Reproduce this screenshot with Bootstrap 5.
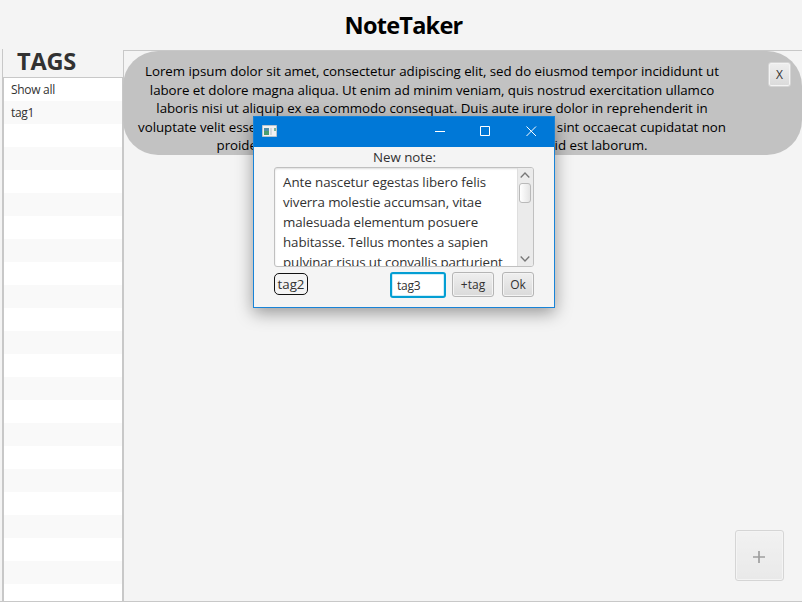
<!DOCTYPE html>
<html lang="en">
<head>
<meta charset="utf-8">
<title>NoteTaker</title>
<link href="https://cdn.jsdelivr.net/npm/bootstrap@5.3.0/dist/css/bootstrap.min.css" rel="stylesheet">
<style>
body{width:802px;height:602px;background:#f4f4f4;font-family:"Open Sans","Noto Sans",sans-serif;font-size:12px;color:#323232;line-height:1}
.app-title{height:49px;font-size:23.5px;line-height:51px;color:#000;letter-spacing:-.75px;padding-left:5px}
.side{width:121px;margin-left:2px;border-left:1px solid #c8c8c8}
.side h2{height:28px;font-size:23.5px;line-height:25px;padding-left:14px;letter-spacing:-.2px}
.tag-list{border:solid #c8c8c8;border-width:1px 1px 0;background:repeating-linear-gradient(#fff 0 23px,#f9f9f9 23px 46px)}
.tag-list li{height:23px;line-height:24px;padding-left:7px;letter-spacing:-.3px}
.notes{margin-top:1px;border:solid #c8c8c8;border-width:1px 0 0 1px}
.main-row{border-bottom:1px solid #c8c8c8}
.note{height:104px;margin-left:-1px;background:#c2c2c2;border-radius:35px;padding:11px 11px 0 15px}
.note-text{width:588px;font-size:13.33px;line-height:18.5px;color:#000;letter-spacing:-.04px}
.note-text div{white-space:nowrap;display:flex;justify-content:center}
.note-text .snug{letter-spacing:-.054px}
.fx{color:#323232;border:1px solid #b5b5b5;border-radius:3px;background:linear-gradient(#efefef,#dadada);box-shadow:inset 0 0 0 1px #f4f4f4;padding:0;font-size:12px;line-height:1}
.btn-close-note{width:23px;height:25px;border-color:#d5d5d5}
.btn-add{width:49px;height:51px;opacity:.4;margin:0 18px 20px 0;border-color:#a8a8a8}
.btn-add svg{margin:2px 2px 0 0}
.window{left:253px;top:116px;width:302px;height:192px;background:#f4f4f4;border:1px solid #1883d7;box-shadow:0 5px 16px rgba(0,0,0,.38)}
.title-bar{height:30px;background:#0078d7}
.lbl{height:20px;font-size:13.33px;line-height:21px;letter-spacing:-.05px;padding-left:1px}
.area{height:100px;margin:0 20px;background:#fff;border:1px solid #c0c0c0;border-radius:3px;box-shadow:inset 0 1px 2px #ddd}
.area-text{font-size:13.33px;line-height:20px;padding:4px 0 0 8px;white-space:nowrap;letter-spacing:-.1px}
.area-text .wide{letter-spacing:-.05px}
.bar{width:16px;background:#ebebeb;border-left:1px solid #dedede;padding-right:2px}
.thumb{width:12px;height:20px;border:1px solid #b9b9b9;border-radius:3px;background:linear-gradient(90deg,#fff,#e4e4e4)}
.foot{margin:5px 20px 0}
.chip{width:34px;height:22px;margin-top:1px;border:1px solid #111;border-radius:5px;font-size:13.33px;line-height:20px;letter-spacing:-.05px}
.field{width:56px;height:26px;margin-right:6px;border:2px solid #039ed3;border-radius:3px;background:#fff;box-shadow:inset 0 0 0 1px #cdeef9;padding:0 0 0 5px;font-size:12px;letter-spacing:-.2px;color:#323232;outline:0}
.btn-tag{width:42px;height:25px}
.btn-ok{width:32px;height:25px}
</style>
<script src="https://cdn.jsdelivr.net/npm/bootstrap@5.3.0/dist/js/bootstrap.bundle.min.js"></script>
</head>
<body class="d-flex flex-column overflow-hidden position-relative">
<h1 class="app-title fw-bold text-center m-0">NoteTaker</h1>
<div class="main-row d-flex flex-grow-1">
  <aside class="side d-flex flex-column flex-shrink-0">
    <h2 class="fw-bold m-0">TAGS</h2>
    <ul class="tag-list list-unstyled flex-grow-1 m-0"><li>Show all</li><li>tag1</li></ul>
  </aside>
  <main class="notes d-flex flex-column flex-grow-1 justify-content-between">
    <article class="note d-flex justify-content-between">
      <div class="note-text">
        <div>Lorem ipsum dolor sit amet, consectetur adipiscing elit, sed do eiusmod tempor incididunt ut</div>
        <div class="snug">labore et dolore magna aliqua. Ut enim ad minim veniam, quis nostrud exercitation ullamco</div>
        <div class="snug">laboris nisi ut aliquip ex ea commodo consequat. Duis aute irure dolor in reprehenderit in</div>
        <div>voluptate velit esse cillum dolore eu fugiat nulla pariatur. Excepteur sint occaecat cupidatat non</div>
        <div>proident, sunt in culpa qui officia deserunt mollit anim id est laborum.</div>
      </div>
      <button class="btn fx btn-close-note">X</button>
    </article>
    <button class="btn fx btn-add align-self-end" aria-label="Add note"><svg width="12" height="12" viewBox="0 0 12 12" stroke="#222" stroke-width="1.7"><path d="M6 0v12M0 6h12"/></svg></button>
  </main>
</div>
<section class="window position-absolute">
  <div class="title-bar d-flex align-items-center">
    <svg width="300" height="30" viewBox="0 0 300 30" fill="none">
      <path fill="#f2f2f2" stroke="#b9c4cc" d="M8.500 8.500h14v11h-14z"/>
      <path fill="#4f8fa8" d="M10 11h5v4h-5z"/><path fill="#4b9d70" d="M10 14h5v4h-5z"/>
      <path fill="#d5dade" d="M16 11h2v7h-2z"/><path fill="#79b69c" d="M20 11h2v3h-2z"/>
      <path stroke="#fff" d="M181 14.500h10M226.500 9.500h9v9h-9zM272.500 9.500l9.500 9.500M282 9.500l-9.500 9.500"/>
    </svg>
  </div>
  <div class="lbl text-center">New note:</div>
  <div class="area d-flex overflow-hidden">
    <div class="area-text flex-grow-1">
      <div class="wide">Ante nascetur egestas libero felis</div>
      <div>viverra molestie accumsan, vitae</div>
      <div>malesuada elementum posuere</div>
      <div>habitasse. Tellus montes a sapien</div>
      <div>pulvinar risus ut convallis parturient</div>
    </div>
    <div class="bar d-flex flex-column align-items-center flex-shrink-0">
      <svg width="10" height="15" fill="none" stroke="#777" stroke-width="1.300"><path d="M.7 9.500 5 5l4.300 4.500"/></svg>
      <div class="thumb"></div>
      <svg class="mt-auto" width="10" height="14" fill="none" stroke="#777" stroke-width="1.300"><path d="M.7 4.500 5 9l4.300-4.500"/></svg>
    </div>
  </div>
  <div class="foot d-flex">
    <span class="chip text-center">tag2</span>
    <input class="field ms-auto" value="tag3" aria-label="Tag">
    <button class="btn fx btn-tag">+tag</button>
    <button class="btn fx btn-ok ms-2">Ok</button>
  </div>
</section>
</body>
</html>
